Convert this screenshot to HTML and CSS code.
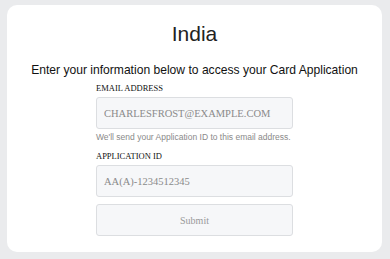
FILE: index.html
```html
<!DOCTYPE html>
<html>
<head>
<meta charset="utf-8">
<link rel="stylesheet" href="styles.css">
</head>
<body>
<div class="card">
  <h1 class="title">India</h1>
  <p class="lead">Enter your information below to access your Card Application</p>
  <form class="form">
    <label class="label">EMAIL ADDRESS</label>
    <input class="field" type="text" placeholder="CHARLESFROST@EXAMPLE.COM">
    <div class="help">We'll send your Application ID to this email address.</div>
    <label class="label label-second">APPLICATION ID</label>
    <input class="field" type="text" placeholder="AA(A)-1234512345">
    <button class="submit" type="button">Submit</button>
  </form>
</div>
</body>
</html>
```
FILE: styles.css
```css
html, body {
  margin: 0;
  padding: 0;
  background: #eaebed;
}
body {
  padding: 5px 8px 0 7px;
  height: 259px;
  box-sizing: border-box;
  overflow: hidden;
}
.card {
  background: #ffffff;
  border-radius: 10px;
  height: 247px;
  box-sizing: border-box;
  padding-top: 17px;
  display: flex;
  flex-direction: column;
  align-items: center;
}
.title {
  margin: 0;
  font-family: "Liberation Sans", Arial, sans-serif;
  font-weight: normal;
  font-size: 21px;
  line-height: 24px;
  color: #222;
}
.lead {
  margin: 16px 0 0 0;
  font-family: "Liberation Sans", Arial, sans-serif;
  font-size: 12.1px;
  line-height: 16px;
  color: #111;
}
.form {
  width: 197px;
  display: flex;
  flex-direction: column;
  margin-top: 5px;
}
.label {
  font-family: "Liberation Serif", "Times New Roman", serif;
  font-size: 8.5px;
  line-height: 10px;
  color: #111;
  margin-bottom: 4px;
}
.label-second {
  margin-top: 9px;
}
.field {
  box-sizing: border-box;
  width: 197px;
  height: 32px;
  margin: 0;
  border: 1px solid #dcdee1;
  border-radius: 3px;
  background: #f6f7f9;
  padding: 0 0 0 7px;
  font-family: "Liberation Serif", "Times New Roman", serif;
  font-size: 10.5px;
  color: #777;
  outline: none;
}
.field::placeholder {
  color: #8a8a8a;
}
.help {
  font-family: "Liberation Sans", Arial, sans-serif;
  font-size: 8.5px;
  line-height: 10px;
  color: #8a8a8a;
  margin-top: 3px;
}
.submit {
  box-sizing: border-box;
  width: 197px;
  height: 32px;
  margin: 7px 0 0 0;
  border: 1px solid #dcdee1;
  border-radius: 3px;
  background: #f6f7f9;
  font-family: "Liberation Serif", "Times New Roman", serif;
  font-size: 10px;
  color: #999;
  padding: 0;
}
```
